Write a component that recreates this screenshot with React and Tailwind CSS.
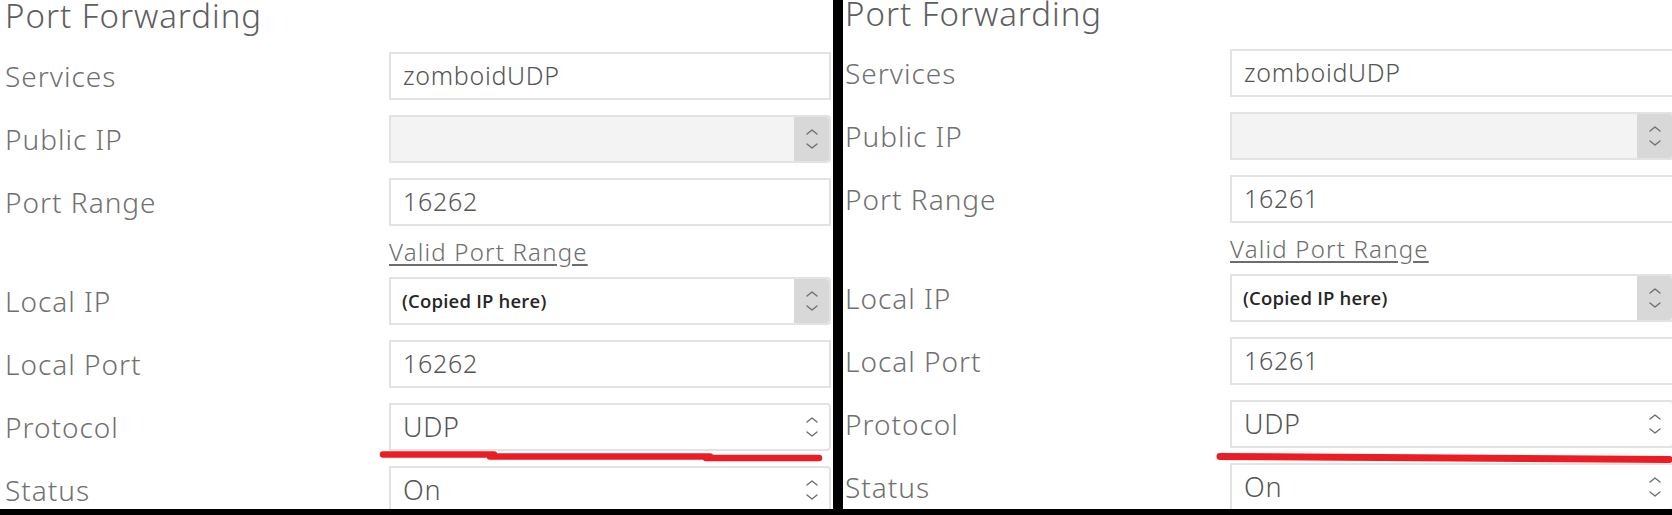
const labelFont = { fontFamily: '"Noto Sans", Lato, sans-serif' };

function Chevrons() {
    return (
        <svg width="12" height="20" viewBox="0 0 12 20" fill="none" stroke="#6f6f6f" strokeWidth="1.4" strokeLinecap="round" strokeLinejoin="round">
            <path d="M1 5 L6 1 L11 5" />
            <path d="M1 15 L6 19 L11 15" />
        </svg>
    );
}

function TextBox({ value }) {
    return (
        <div className="flex h-[48px] w-full items-center border-2 border-[#e3e3e3] bg-white pl-[12px] text-[25px] font-light tracking-[0.7px] text-[#555555]">
            {value}
        </div>
    );
}

function SelectBox({ value, small, disabled, grayStepper }) {
    return (
        <div className={`flex h-[48px] w-full items-stretch rounded-r-[4px] border-2 border-[#e3e3e3] ${disabled ? 'bg-[#f3f3f4]' : 'bg-white'}`}>
            {small ? (
                <span className="flex flex-1 items-center pl-[11px] text-[18.5px] font-semibold tracking-[0.2px] text-[#262626]" style={{ fontFamily: '"Open Sans", sans-serif' }}>
                    {value}
                </span>
            ) : (
                <span className="flex flex-1 items-center pl-[12px] text-[27px] font-light tracking-[0.7px] text-[#555555]">{value}</span>
            )}
            <span className={`flex w-[35px] items-center justify-center rounded-r-[3px] ${grayStepper ? 'bg-[#d8d8d8]' : ''}`}>
                <Chevrons />
            </span>
        </div>
    );
}

function Row({ label, labelCol, inputWidth, children }) {
    return (
        <div className="flex h-[48px] items-center">
            <div className={`${labelCol} text-[28px] font-light tracking-[1px] text-[#707070]`}>{label}</div>
            <div className={inputWidth}>{children}</div>
        </div>
    );
}

function Panel({ port, right }) {
    const labelCol = right ? 'w-[385px] shrink-0' : 'w-[384px] shrink-0';
    const inputWidth = right ? 'w-[444px] shrink-0' : 'w-[442px] shrink-0';

    return (
        <div
            className={`relative h-[509px] shrink-0 overflow-hidden bg-white ${right ? 'w-[829px] pl-[2px]' : 'w-[833px] pl-[5px]'}`}
            style={labelFont}
        >
            <h1 className={`h-[30px] pt-[2px] text-[33px] font-light leading-[28px] tracking-[1px] text-[#5e5e5e] ${right ? '-mt-[2px]' : ''}`}>
                Port Forwarding
            </h1>

            <div className={`flex flex-col gap-[15px] ${right ? 'mt-[21px]' : 'mt-[22px]'}`}>
                <Row label="Services" labelCol={labelCol} inputWidth={inputWidth}>
                    <TextBox value="zomboidUDP" />
                </Row>
                <Row label="Public IP" labelCol={labelCol} inputWidth={inputWidth}>
                    <SelectBox value="" disabled grayStepper />
                </Row>
                <Row label="Port Range" labelCol={labelCol} inputWidth={inputWidth}>
                    <TextBox value={port} />
                </Row>
                <div className="flex h-[21px]">
                    <div className={labelCol} />
                    <a href="#" className="text-[24px] font-light leading-[21px] tracking-[1.2px] text-[#6d6d6d] underline underline-offset-[3px]">
                        Valid Port Range
                    </a>
                </div>
                <Row label="Local IP" labelCol={labelCol} inputWidth={inputWidth}>
                    <SelectBox value="(Copied IP here)" small grayStepper />
                </Row>
                <Row label="Local Port" labelCol={labelCol} inputWidth={inputWidth}>
                    <TextBox value={port} />
                </Row>
                <Row label="Protocol" labelCol={labelCol} inputWidth={inputWidth}>
                    <SelectBox value="UDP" />
                </Row>
                <Row label="Status" labelCol={labelCol} inputWidth={inputWidth}>
                    <SelectBox value="On" />
                </Row>
            </div>

            {/* red marker under the protocol field */}
            {right ? (
                <svg className="absolute left-[370px] top-[446px]" width="460" height="20" viewBox="0 0 460 20" fill="none">
                    <path d="M7 10.5 L456 13.5" stroke="#ec1c24" strokeWidth="7" strokeLinecap="round" />
                </svg>
            ) : (
                <svg className="absolute left-[376px] top-[446px]" width="450" height="20" viewBox="0 0 450 20" fill="none">
                    <path d="M7 8.5 H118 M114 10.5 H334 M330 12 H443" stroke="#ec1c24" strokeWidth="6.5" strokeLinecap="round" />
                </svg>
            )}
        </div>
    );
}

export default function App() {
    return (
        <div className="flex h-[515px] w-[1672px] gap-[10px] overflow-hidden bg-black">
            <Panel port="16262" />
            <Panel port="16261" right />
        </div>
    );
}
